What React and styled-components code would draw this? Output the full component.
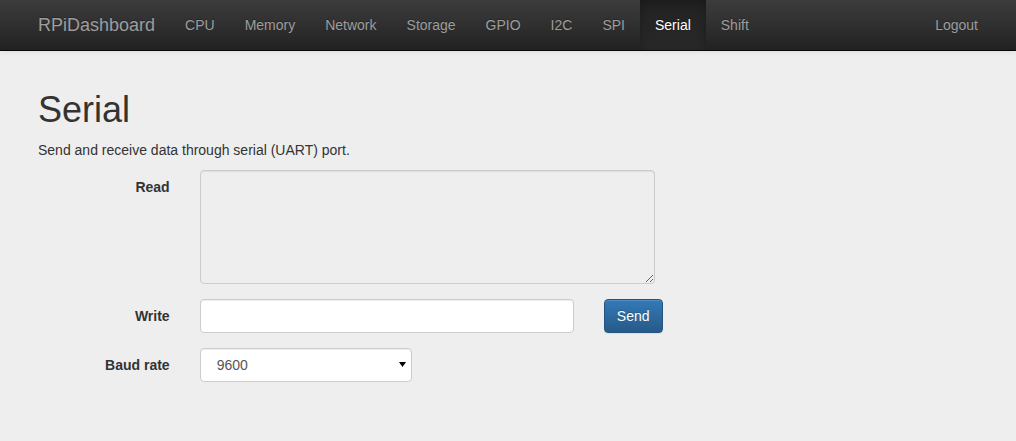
import React from "react";
import styled, { createGlobalStyle } from "styled-components";

const Global = createGlobalStyle`
  html { background: #eee; }
  body {
    margin: 0;
    background: #eee;
    color: #333;
    font-family: "Liberation Sans", Arial, sans-serif;
    font-size: 14px;
    line-height: 1.42857143;
  }
  * { box-sizing: border-box; }
`;

const Navbar = styled.nav`
  min-height: 50px;
  border-bottom: 1px solid #080808;
  background-image: linear-gradient(to bottom, #3c3c3c 0, #222 100%);
  box-shadow: 0 1px 5px rgba(0, 0, 0, 0.075);
`;

const Container = styled.div`
  width: 970px;
  margin: 0 auto;
  padding: 0 15px;
`;

const NavInner = styled(Container)`
  display: flex;
  align-items: stretch;
  height: 50px;
`;

const Main = styled(Container)`
  padding-top: 19px;
`;

const Brand = styled.a`
  margin-left: -15px;
  padding: 15px;
  font-size: 18px;
  line-height: 20px;
  color: #9d9d9d;
  text-decoration: none;
  text-shadow: 0 -1px 0 rgba(0, 0, 0, 0.25);
`;

const NavList = styled.ul`
  display: flex;
  list-style: none;
  margin: 0;
  padding: 0;
  margin-right: ${(p) => (p.$right ? "-15px" : "0")};
  margin-left: ${(p) => (p.$right ? "auto" : "0")};
`;

const NavLink = styled.a`
  display: block;
  padding: 15px;
  line-height: 20px;
  color: ${(p) => (p.$active ? "#fff" : "#9d9d9d")};
  text-decoration: none;
  text-shadow: 0 -1px 0 rgba(0, 0, 0, 0.25);
  background-image: ${(p) =>
    p.$active ? "linear-gradient(to bottom, #222 0, #282828 100%)" : "none"};
  box-shadow: ${(p) => (p.$active ? "inset 0 3px 9px rgba(0, 0, 0, 0.25)" : "none")};
`;

const Title = styled.h1`
  margin: 20px 0 10px;
  font-size: 36px;
  font-weight: 500;
  line-height: 1.1;
`;

const Lead = styled.p`
  margin: 0 0 10px;
`;

const Form = styled.form`
  margin-top: 10px;
`;

const FormGroup = styled.div`
  display: flex;
  align-items: flex-start;
  margin: 0 -15px 15px;
`;

const Col = styled.div`
  flex: 0 0 ${(p) => (p.$span / 12) * 100}%;
  max-width: ${(p) => (p.$span / 12) * 100}%;
  padding: 0 15px;
  position: relative;
`;

const Label = styled.label`
  display: block;
  padding-top: 7px;
  text-align: right;
  font-weight: 700;
`;

const baseControl = `
  display: block;
  width: 100%;
  padding: 6px 12px;
  font-family: inherit;
  font-size: 14px;
  line-height: 1.42857143;
  color: #555;
  border: 1px solid #ccc;
  border-radius: 4px;
  box-shadow: inset 0 1px 1px rgba(0, 0, 0, 0.075);
  outline: none;
`;

const TextArea = styled.textarea`
  ${baseControl}
  background: #eee;
  resize: vertical;
  margin: 0;
`;

const Input = styled.input`
  ${baseControl}
  height: 34px;
  background: #fff;
`;

const SelectWrap = styled.div`
  position: relative;
`;

const Select = styled.select`
  ${baseControl}
  height: 34px;
  background: #fff;
  padding-left: 16px;
  appearance: none;
  -webkit-appearance: none;
  color: #555;
`;

const Caret = styled.svg`
  position: absolute;
  right: 6px;
  top: 14px;
  pointer-events: none;
`;

const Button = styled.button`
  display: inline-block;
  padding: 6px 12px;
  font-family: inherit;
  font-size: 14px;
  line-height: 1.42857143;
  color: #fff;
  border: 1px solid #245580;
  border-radius: 4px;
  background-image: linear-gradient(to bottom, #337ab7 0, #265a88 100%);
  text-shadow: 0 -1px 0 rgba(0, 0, 0, 0.2);
  box-shadow: inset 0 1px 0 rgba(255, 255, 255, 0.15), 0 1px 1px rgba(0, 0, 0, 0.075);
  cursor: pointer;
`;

const links = ["CPU", "Memory", "Network", "Storage", "GPIO", "I2C", "SPI", "Serial", "Shift"];

export default function App() {
  return (
    <>
      <Global />
      <Navbar>
        <NavInner>
          <Brand href="#">RPiDashboard</Brand>
          <NavList>
            {links.map((l) => (
              <li key={l}>
                <NavLink href="#" $active={l === "Serial"}>
                  {l}
                </NavLink>
              </li>
            ))}
          </NavList>
          <NavList $right>
            <li>
              <NavLink href="#">Logout</NavLink>
            </li>
          </NavList>
        </NavInner>
      </Navbar>
      <Main>
        <Title>Serial</Title>
        <Lead>Send and receive data through serial (UART) port.</Lead>
        <Form onSubmit={(e) => e.preventDefault()}>
          <FormGroup>
            <Col $span={2}>
              <Label>Read</Label>
            </Col>
            <Col $span={6}>
              <TextArea rows={5} readOnly />
            </Col>
          </FormGroup>
          <FormGroup>
            <Col $span={2}>
              <Label>Write</Label>
            </Col>
            <Col $span={5}>
              <Input type="text" />
            </Col>
            <Col $span={1}>
              <Button type="submit">Send</Button>
            </Col>
          </FormGroup>
          <FormGroup>
            <Col $span={2}>
              <Label>Baud rate</Label>
            </Col>
            <Col $span={3}>
              <SelectWrap>
                <Select defaultValue="9600">
                  <option>1200</option>
                  <option>2400</option>
                  <option>4800</option>
                  <option>9600</option>
                  <option>19200</option>
                  <option>38400</option>
                  <option>57600</option>
                  <option>115200</option>
                </Select>
                <Caret width="7" height="5" viewBox="0 0 7 5">
                  <path d="M0 0 H7 L3.5 5 Z" fill="#000" />
                </Caret>
              </SelectWrap>
            </Col>
          </FormGroup>
        </Form>
      </Main>
    </>
  );
}
